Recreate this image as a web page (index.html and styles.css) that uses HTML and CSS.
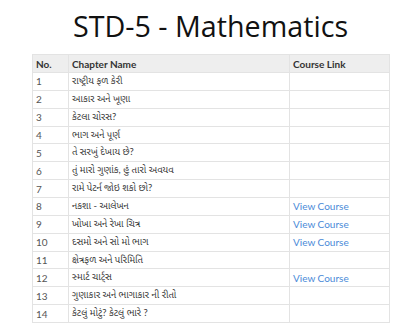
FILE: index.html
```html
<!DOCTYPE html>
<html lang="gu">
<head>
<meta charset="utf-8">
<link rel="stylesheet" href="styles.css">
</head>
<body>
<div class="page">
  <h1 class="title">STD-5 - Mathematics</h1>
  <table class="chapters">
    <thead>
      <tr><th class="c-no">No.</th><th class="c-name">Chapter Name</th><th class="c-link">Course Link</th></tr>
    </thead>
    <tbody>
      <tr><td>1</td><td class="gu">રાષ્ટ્રીય ફળ કેરી</td><td></td></tr>
      <tr><td>2</td><td class="gu">આકાર અને ખૂણા</td><td></td></tr>
      <tr><td>3</td><td class="gu">કેટલા ચોરસ?</td><td></td></tr>
      <tr><td>4</td><td class="gu">ભાગ અને પૂર્ણ</td><td></td></tr>
      <tr><td>5</td><td class="gu">તે સરખું દેખાય છે?</td><td></td></tr>
      <tr><td>6</td><td class="gu">તું મારો ગુણાંક, હું તારો અવયવ</td><td></td></tr>
      <tr><td>7</td><td class="gu">રામે પેટર્ન જોઇ શકો છો?</td><td></td></tr>
      <tr><td>8</td><td class="gu">નકશા - આલેખન</td><td><a href="#">View Course</a></td></tr>
      <tr><td>9</td><td class="gu">ખોખા અને રેખા ચિત્ર</td><td><a href="#">View Course</a></td></tr>
      <tr><td>10</td><td class="gu">દસમો અને સો મો ભાગ</td><td><a href="#">View Course</a></td></tr>
      <tr><td>11</td><td class="gu">ક્ષેત્રફળ અને પરિમિતિ</td><td></td></tr>
      <tr><td>12</td><td class="gu">સ્માર્ટ ચાર્ટ્સ</td><td><a href="#">View Course</a></td></tr>
      <tr><td>13</td><td class="gu">ગુણાકાર અને ભાગાકાર ની રીતો</td><td></td></tr>
      <tr><td>14</td><td class="gu">કેટલું મોટું? કેટલું ભારે ?</td><td></td></tr>
    </tbody>
  </table>
</div>
</body>
</html>
```
FILE: styles.css
```css
html, body {
  margin: 0;
  padding: 0;
  background: #fff;
}
body {
  font-family: "Lato", "Noto Sans", "Noto Sans Gujarati", sans-serif;
  color: #333;
}
.page {
  padding: 7px 11px 0 32px;
}
.title {
  margin: 0 0 9px 0;
  text-align: center;
  font-family: "Open Sans", "Noto Sans", sans-serif;
  font-size: 28.7px;
  font-weight: 400;
  line-height: 38px;
  color: #111;
}
.chapters {
  width: 357px;
  border-collapse: collapse;
  border: 1px solid #e3e3e3;
  font-size: 10px;
  table-layout: fixed;
}
.chapters th, .chapters td {
  box-sizing: border-box;
  border: 1px solid #e3e3e3;
  padding: 0 3px;
  text-align: left;
  vertical-align: middle;
  white-space: nowrap;
  overflow: hidden;
}
.chapters th {
  background: #eeeeee;
  font-weight: 700;
  color: #333;
  height: 18px;
}
.chapters td {
  height: 17.86px;
  color: #555;
}
.chapters td.gu {
  font-size: 9.5px;
  color: #3a3a3a;
}
.c-no { width: 36px; }
.c-name { width: 221px; }
.c-link { width: 100px; }
.chapters a {
  color: #4a8ad8;
  text-decoration: none;
}
```
